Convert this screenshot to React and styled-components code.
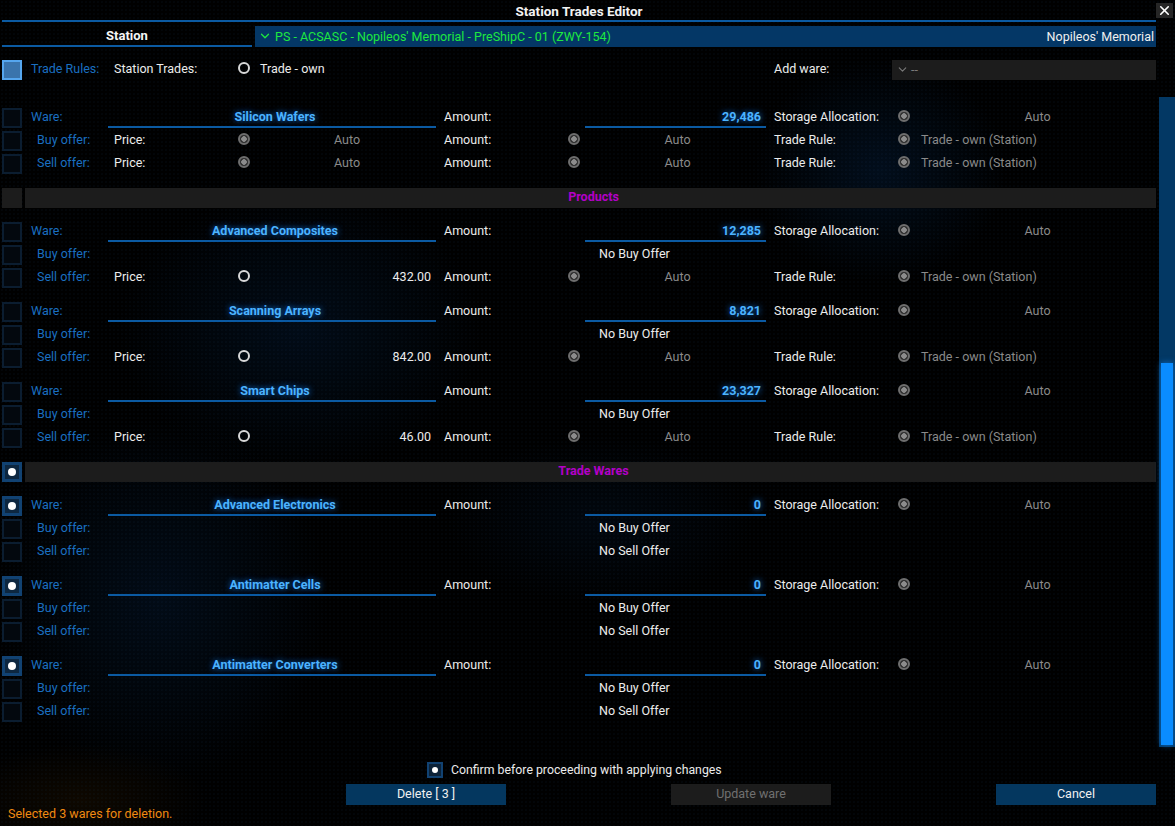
import React from "react";
import styled, { createGlobalStyle, css } from "styled-components";
import { ChevronDown, X } from "lucide-react";

const GlobalStyle = createGlobalStyle`
  html, body {
    margin: 0;
    padding: 0;
    background: #000;
  }
  body {
    font-family: Roboto, "Noto Sans", "Liberation Sans", sans-serif;
    color: #e6e6e6;
    -webkit-font-smoothing: antialiased;
  }
  * { box-sizing: border-box; }
`;

const COLS = "20px 80px 127px 12px 183px 126px 12px 183px 126px 12px 1fr";

const Page = styled.div`
  position: relative;
  width: 1175px;
  height: 826px;
  overflow: hidden;
  padding-left: 2px;
  font-size: 12.5px;
  background:
    radial-gradient(circle, rgba(40, 90, 150, 0.08) 0.6px, transparent 1px) 0 0 / 4px 4px,
    radial-gradient(ellipse 260px 200px at 300px 330px, rgba(6, 45, 90, 0.25), transparent 70%),
    radial-gradient(ellipse 240px 260px at 160px 600px, rgba(6, 40, 80, 0.28), transparent 70%),
    radial-gradient(ellipse 180px 160px at 880px 170px, rgba(6, 45, 90, 0.3), transparent 70%),
    radial-gradient(ellipse 220px 120px at 600px 520px, rgba(6, 35, 70, 0.2), transparent 70%),
    radial-gradient(ellipse 180px 80px at 80px 800px, rgba(70, 40, 0, 0.2), transparent 70%),
    #000;
`;

const TitleRow = styled.div`
  display: grid;
  grid-template-columns: 1154px 1fr;
  align-items: start;
`;

const Title = styled.div`
  height: 22px;
  border-bottom: 2px solid #0b5aa2;
  text-align: center;
  font-weight: 700;
  font-size: 13.5px;
  line-height: 23px;
  color: #f2f2f2;
`;

const CloseButton = styled.button`
  margin: 3px 0 0 0;
  width: 17px;
  height: 15px;
  padding: 0;
  border: none;
  background: #262626;
  color: #fff;
  display: flex;
  align-items: center;
  justify-content: center;
`;

const HeaderBar = styled.div`
  margin-top: 4px;
  width: 1154px;
  display: grid;
  grid-template-columns: 250px 1fr;
  gap: 3px;
  height: 20px;
`;

const Tab = styled.div`
  border-bottom: 2px solid #0b5aa2;
  text-align: center;
  font-weight: 700;
  font-size: 13px;
  line-height: 19px;
  color: #f5f5f5;
`;

const StationSelect = styled.div`
  background: #043766;
  display: flex;
  align-items: center;
  padding: 0 2px 1px 3px;
  gap: 3px;
  color: #1ee840;
  font-size: 12.5px;
`;

const SelectText = styled.span`
  flex: 1;
`;

const SelectOwner = styled.span`
  color: #f0f0f0;
`;

const GridRow = styled.div`
  display: grid;
  grid-template-columns: ${COLS};
  column-gap: 3px;
  height: 20px;
  width: 1154px;
  align-items: stretch;
`;

const RulesRow = styled(GridRow)`
  margin-top: 14px;
`;

const Cell = styled.div`
  display: flex;
  align-items: center;
  padding-bottom: 4px;
  white-space: nowrap;
  grid-column: ${(p) => p.$col || "auto"};
  justify-content: ${(p) =>
    p.$align === "center" ? "center" : p.$align === "right" ? "flex-end" : "flex-start"};
  padding-left: ${(p) => (p.$pl != null ? p.$pl : 0)}px;
  padding-right: ${(p) => (p.$pr != null ? p.$pr : 0)}px;
  color: ${(p) => (p.$muted ? "#8a8a8a" : "#ececec")};
`;

const BlueLabel = styled(Cell)`
  color: #1a6fc0;
`;

const WareName = styled(Cell)`
  justify-content: center;
  border-bottom: 2px solid #0b5aa2;
  padding-bottom: 2px;
  padding-left: 6px;
  font-weight: 700;
  color: #4cb3ff;
  text-shadow: 0 0 6px rgba(20, 130, 255, 0.85);
`;

const AmountValue = styled(WareName)`
  justify-content: flex-end;
  margin-left: 2px;
  padding-right: 5px;
`;

const Check = styled.div`
  width: 20px;
  height: 20px;
  display: flex;
  align-items: center;
  justify-content: center;
  ${(p) =>
    p.$variant === "rules"
      ? css`
          background: #3a74ac;
          border: 2px solid #55a6ee;
        `
      : p.$variant === "header"
      ? css`
          background: #1c1c1c;
        `
      : p.$checked
      ? css`
          background: #0d2740;
          border: 3px solid #114272;
        `
      : css`
          background: #03080e;
          border: 2px solid #0b1d30;
        `}
`;

const Dot = styled.span`
  width: 8px;
  height: 8px;
  border-radius: 50%;
  background: #fff;
`;

const RadioCell = styled.div`
  display: flex;
  align-items: center;
  justify-content: center;
  padding-bottom: 4px;
`;

const Radio = styled.span`
  width: 12px;
  height: 12px;
  border-radius: 50%;
  ${(p) =>
    p.$disabled
      ? css`
          border: 2px solid #6e6e6e;
          background: radial-gradient(circle, #8c8c8c 0 2.5px, #2e2e2e 3px);
        `
      : css`
          border: 2px solid #d8d8d8;
          background: transparent;
        `}
`;

const AddWare = styled.div`
  grid-column: 10 / 12;
  margin-left: -6px;
  background: #1c1c1c;
  display: flex;
  align-items: center;
  gap: 2px;
  padding: 0 4px 1px 4px;
  color: #7a7a7a;
`;

const ScrollRegion = styled.div`
  margin-top: 17px;
  height: 650px;
  display: grid;
  grid-template-columns: 1154px 16px;
  column-gap: 3px;
`;

const List = styled.div`
  padding-top: 11px;
  display: flex;
  flex-direction: column;
  gap: 14px;
`;

const Group = styled.div`
  display: flex;
  flex-direction: column;
  gap: 3px;
`;

const SectionBar = styled.div`
  grid-column: 2 / -1;
  background: #1c1c1c;
  display: flex;
  align-items: center;
  justify-content: center;
  padding: 0 0 4px 6px;
  font-weight: 700;
  color: #b400c8;
`;

const Track = styled.div`
  background: #033864;
  display: flex;
  flex-direction: column;
  justify-content: flex-end;
  padding: 0 2px 2px 2px;
`;

const Thumb = styled.div`
  height: 382px;
  background: #0a8cff;
  box-shadow: 0 0 6px rgba(20, 140, 255, 0.6);
`;

const ConfirmRow = styled.div`
  margin-top: 15px;
  width: 1154px;
  display: flex;
  align-items: center;
  gap: 8px;
  padding-left: 425px;
  height: 16px;
`;

const SmallCheck = styled.div`
  width: 16px;
  height: 16px;
  background: #0c2238;
  border: 2px solid #114272;
  display: flex;
  align-items: center;
  justify-content: center;
`;

const SmallDot = styled.span`
  width: 6px;
  height: 6px;
  border-radius: 50%;
  background: #fff;
`;

const ConfirmText = styled.span`
  color: #ececec;
  font-size: 12.3px;
`;

const ButtonRow = styled.div`
  margin-top: 6px;
  width: 1154px;
  display: flex;
  justify-content: flex-end;
  gap: 165px;
`;

const Button = styled.button`
  width: 160px;
  height: 21px;
  border: none;
  padding: 0 0 2px 0;
  font-family: inherit;
  font-size: 12.5px;
  ${(p) =>
    p.$disabled
      ? css`
          background: #1c1c1c;
          color: #707070;
        `
      : css`
          background: #04375f;
          color: #f0f0f0;
        `}
`;

const Status = styled.div`
  margin-top: 1px;
  padding-left: 6px;
  line-height: 16px;
  color: #f08a12;
`;

function OfferRow({ label, offer, noText }) {
  return (
    <GridRow>
      <Check />
      <BlueLabel $pl={12}>{label}</BlueLabel>
      {offer ? (
        <>
          <Cell $pl={6}>Price:</Cell>
          <RadioCell>
            <Radio $disabled={offer.price === "Auto"} />
          </RadioCell>
          {offer.price === "Auto" ? (
            <Cell $align="center" $pl={5} $muted>
              Auto
            </Cell>
          ) : (
            <Cell $align="right" $pr={5}>
              {offer.price}
            </Cell>
          )}
          <Cell $pl={5}>Amount:</Cell>
          <RadioCell>
            <Radio $disabled />
          </RadioCell>
          <Cell $align="center" $pl={6} $muted>
            Auto
          </Cell>
          <Cell $pl={5}>Trade Rule:</Cell>
          <RadioCell>
            <Radio $disabled />
          </RadioCell>
          <Cell $pl={8} $muted>
            Trade - own (Station)
          </Cell>
        </>
      ) : noText ? (
        <Cell $col="8" $pl={16}>
          {noText}
        </Cell>
      ) : null}
    </GridRow>
  );
}

function WareGroup({ ware }) {
  return (
    <Group>
      <GridRow>
        <Check $checked={ware.checked}>{ware.checked && <Dot />}</Check>
        <BlueLabel $pl={6}>Ware:</BlueLabel>
        <WareName $col="3 / 6">{ware.name}</WareName>
        <Cell $pl={5}>Amount:</Cell>
        <AmountValue $col="8">{ware.amount}</AmountValue>
        <Cell $col="9" $pl={5}>
          Storage Allocation:
        </Cell>
        <RadioCell>
          <Radio $disabled />
        </RadioCell>
        <Cell $align="center" $pl={6} $muted>
          Auto
        </Cell>
      </GridRow>
      <OfferRow label="Buy offer:" offer={ware.buy} noText={ware.noBuy && "No Buy Offer"} />
      <OfferRow label="Sell offer:" offer={ware.sell} noText={ware.noSell && "No Sell Offer"} />
    </Group>
  );
}

function SectionHeader({ title, checked }) {
  return (
    <GridRow>
      <Check $variant={checked ? undefined : "header"} $checked={checked}>
        {checked && <Dot />}
      </Check>
      <SectionBar>{title}</SectionBar>
    </GridRow>
  );
}

const resources = [
  { name: "Silicon Wafers", amount: "29,486", buy: { price: "Auto" }, sell: { price: "Auto" } },
];

const products = [
  { name: "Advanced Composites", amount: "12,285", noBuy: true, sell: { price: "432.00" } },
  { name: "Scanning Arrays", amount: "8,821", noBuy: true, sell: { price: "842.00" } },
  { name: "Smart Chips", amount: "23,327", noBuy: true, sell: { price: "46.00" } },
];

const tradeWares = [
  { name: "Advanced Electronics", amount: "0", checked: true, noBuy: true, noSell: true },
  { name: "Antimatter Cells", amount: "0", checked: true, noBuy: true, noSell: true },
  { name: "Antimatter Converters", amount: "0", checked: true, noBuy: true, noSell: true },
];

export default function App() {
  return (
    <>
      <GlobalStyle />
      <Page>
        <TitleRow>
          <Title>Station Trades Editor</Title>
          <CloseButton aria-label="Close">
            <X size={15} strokeWidth={2.6} />
          </CloseButton>
        </TitleRow>

        <HeaderBar>
          <Tab>Station</Tab>
          <StationSelect>
            <ChevronDown size={14} strokeWidth={2.2} />
            <SelectText>PS - ACSASC - Nopileos' Memorial - PreShipC - 01 (ZWY-154)</SelectText>
            <SelectOwner>Nopileos' Memorial</SelectOwner>
          </StationSelect>
        </HeaderBar>

        <RulesRow>
          <Check $variant="rules" />
          <BlueLabel $pl={6}>Trade Rules:</BlueLabel>
          <Cell $pl={6}>Station Trades:</Cell>
          <RadioCell>
            <Radio />
          </RadioCell>
          <Cell $pl={7}>Trade - own</Cell>
          <Cell $col="9" $pl={5}>
            Add ware:
          </Cell>
          <AddWare>
            <ChevronDown size={13} strokeWidth={2} />
            <span>--</span>
          </AddWare>
        </RulesRow>

        <ScrollRegion>
          <List>
            {resources.map((w) => (
              <WareGroup key={w.name} ware={w} />
            ))}
            <SectionHeader title="Products" />
            {products.map((w) => (
              <WareGroup key={w.name} ware={w} />
            ))}
            <SectionHeader title="Trade Wares" checked />
            {tradeWares.map((w) => (
              <WareGroup key={w.name} ware={w} />
            ))}
          </List>
          <Track>
            <Thumb />
          </Track>
        </ScrollRegion>

        <ConfirmRow>
          <SmallCheck>
            <SmallDot />
          </SmallCheck>
          <ConfirmText>Confirm before proceeding with applying changes</ConfirmText>
        </ConfirmRow>

        <ButtonRow>
          <Button>Delete [ 3 ]</Button>
          <Button $disabled>Update ware</Button>
          <Button>Cancel</Button>
        </ButtonRow>

        <Status>Selected 3 wares for deletion.</Status>
      </Page>
    </>
  );
}
